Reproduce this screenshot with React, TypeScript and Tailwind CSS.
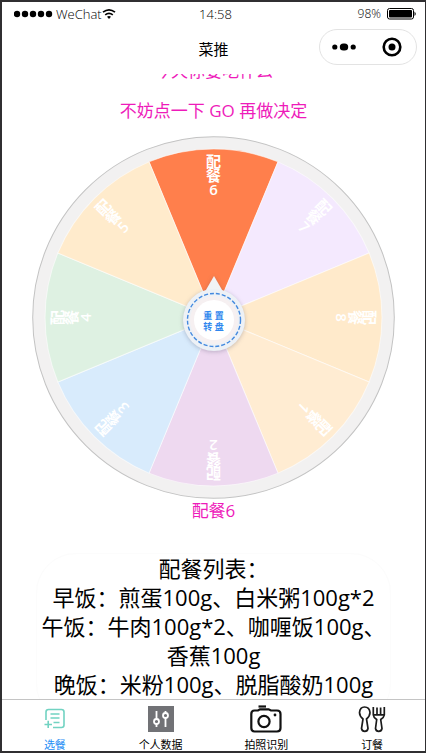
import { useState } from "react";

type Slice = { label: string; digit: string; angle: number; fill: string };

const slices: Slice[] = [
  { label: "配餐", digit: "6", angle: 0, fill: "#ff7f4c" },
  { label: "配餐", digit: "7", angle: 45, fill: "#f4e9fe" },
  { label: "配餐", digit: "8", angle: 90, fill: "#ffeacb" },
  { label: "配餐", digit: "1", angle: 135, fill: "#ffecd2" },
  { label: "配餐", digit: "2", angle: 180, fill: "#eed9f0" },
  { label: "配餐", digit: "3", angle: 225, fill: "#d8ebfc" },
  { label: "配餐", digit: "4", angle: 270, fill: "#def1e2" },
  { label: "配餐", digit: "5", angle: 315, fill: "#ffebcc" },
];

const meals = [
  "配餐列表：",
  "早饭：煎蛋100g、白米粥100g*2",
  "午饭：牛肉100g*2、咖喱饭100g、香蕉100g",
  "晚饭：米粉100g、脱脂酸奶100g",
];

function StatusBar() {
  return (
    <div className="grid grid-cols-3 items-center pt-1 pr-2 pl-3 text-[13px] leading-4 font-light">
      <div className="flex items-center">
        <svg className="h-2 w-10" viewBox="0 0 40 8" aria-hidden="true">
          {[3, 11, 19, 27, 35].map((x) => (
            <circle key={x} cx={x} cy="4" r="3.2" />
          ))}
        </svg>
        <span className="ml-0.5">WeChat</span>
        <svg className="h-3 w-3.5" viewBox="0 0 14 12" fill="none" stroke="#000" aria-hidden="true">
          <path d="M1 4.2Q7-.4 13 4.2" strokeWidth="1.7" />
          <path d="M3.2 6.9Q7 4 10.8 6.9" strokeWidth="1.7" />
          <path d="M5 8.8Q7 7.3 9 8.8L7 11Z" fill="#000" stroke="none" />
        </svg>
      </div>
      <span className="text-center">14:58</span>
      <div className="flex items-center justify-end gap-1.5">
        <span className="text-xs">98%</span>
        <svg className="h-3 w-[30px]" viewBox="0 0 30 12" aria-hidden="true">
          <rect x=".5" y=".5" width="26" height="10.5" rx="2" fill="none" stroke="#000" />
          <rect x="2" y="2" width="23" height="7.5" rx="1" />
          <path d="M27.5 3.5Q30 5.8 27.5 8Z" />
        </svg>
      </div>
    </div>
  );
}

function TitleBar() {
  return (
    <div className="grid grid-cols-[1fr_auto_1fr] items-center">
      <h1 className="col-start-2 pt-1 text-[15px] leading-5">菜推</h1>
      <div className="mr-2 flex h-9 w-[98px] items-center justify-between justify-self-end rounded-full border border-[#e3e3e3] pr-3.5 pl-3">
        <button type="button" aria-label="更多">
          <svg className="h-2 w-6" viewBox="0 0 24 8" aria-hidden="true">
            <circle cx="2.8" cy="4" r="2.6" />
            <rect x="7.8" y="0.4" width="8.4" height="7.2" rx="3.6" />
            <circle cx="21.2" cy="4" r="2.6" />
          </svg>
        </button>
        <button type="button" aria-label="关闭">
          <svg className="h-5 w-5" viewBox="0 0 20 20" aria-hidden="true">
            <circle cx="10" cy="10" r="8.3" fill="none" stroke="#000" strokeWidth="2.6" />
            <circle cx="10" cy="10" r="3.5" />
          </svg>
        </button>
      </div>
    </div>
  );
}

function Wheel({ onReset }: { onReset: () => void }) {
  return (
    <div className="relative mx-[30px]">
      <svg className="block w-full" viewBox="0 0 362 362" role="img" aria-label="配餐转盘">
        <circle cx="181" cy="181" r="180.3" fill="#f2f1f1" stroke="#c3c3c3" />
        {slices.map((s) => (
          <g key={s.angle} transform={`rotate(${s.angle} 181 181)`}>
            <path
              d="M181 181L116.7 25.8A168 168 0 0 1 245.3 25.8Z"
              fill={s.fill}
              stroke="#ffffff"
              strokeOpacity=".55"
            />
          </g>
        ))}
        {slices.map((s) => (
          <g
            key={s.angle}
            transform={`rotate(${s.angle} 181 181)`}
            className="fill-white text-[15px] font-semibold"
            textAnchor="middle"
          >
            <text x="181" y="31">{s.label[0]}</text>
            <text x="181" y="45">{s.label[1]}</text>
            <text x="181" y="59">{s.digit}</text>
          </g>
        ))}
      </svg>
      <button
        type="button"
        onClick={onReset}
        className="absolute top-[139px] left-1/2 h-[78px] w-16 -translate-x-1/2 pt-3.5 text-[9px] leading-[11px] font-bold text-[#2f87ee]"
      >
        <svg className="absolute inset-0 h-full w-full overflow-visible" viewBox="0 0 64 78" aria-hidden="true">
          <g style={{ filter: "drop-shadow(0 1px 2px rgba(60,60,90,.28))" }}>
            <path d="M32 1L21 20H43Z" fill="#f1f3f6" />
            <circle cx="32" cy="45" r="31" fill="#edf1f6" />
          </g>
          <circle cx="32" cy="45" r="24" fill="#f6f0f1" />
          <circle cx="32" cy="45" r="20" fill="#fff" />
          <circle cx="32" cy="45" r="26.5" fill="none" stroke="#4389df" strokeWidth="1.4" strokeDasharray="4 2" />
        </svg>
        <span className="relative block">
          重 置
          <br />转 盘
        </span>
      </button>
    </div>
  );
}

const tabs = [
  {
    name: "选餐",
    icon: (
      <svg className="h-[26px] w-8" viewBox="0 0 32 26" fill="none" stroke="#72d3c2" strokeWidth="1.6" aria-hidden="true">
        <path d="M7 14V6Q7 3.500 9.500 3.500H22.500Q25 3.500 25 6V19Q25 21.500 22.500 21.500H14" />
        <path d="M11.500 8H20.500M11.500 12H20.500M14.500 16.500H20.500M5.500 18.500H13M9.200 14.800V22" />
      </svg>
    ),
  },
  {
    name: "个人数据",
    icon: (
      <svg className="h-[26px] w-[26px]" viewBox="0 0 26 26" fill="none" stroke="#fff" strokeWidth="1.8" aria-hidden="true">
        <rect width="26" height="26" fill="#717276" stroke="none" />
        <path d="M8.500 5V13M8.500 18V21M17.500 5V7M17.500 12V21" />
        <circle cx="8.500" cy="15.500" r="2.500" />
        <circle cx="17.500" cy="9.500" r="2.500" />
      </svg>
    ),
  },
  {
    name: "拍照识别",
    icon: (
      <svg className="h-7 w-8" viewBox="0 0 32 28" fill="none" stroke="#111" strokeWidth="2.2" aria-hidden="true">
        <path d="M8.500 1.500H16" />
        <path d="M4.500 5.500H8L10 4.300H18.500L21 5.500H27Q30.500 5.500 30.500 9V23Q30.500 26.500 27 26.500H4.500Q1.300 26.500 1.300 23V9Q1.300 5.500 4.500 5.500Z" />
        <circle cx="14" cy="16.500" r="5.600" />
        <circle cx="25" cy="10" r="1.400" fill="#111" stroke="none" />
      </svg>
    ),
  },
  {
    name: "订餐",
    icon: (
      <svg className="h-7 w-7" viewBox="0 0 28 28" fill="none" stroke="#1b1b1b" strokeWidth="1.7" strokeLinejoin="round" aria-hidden="true">
        <path d="M5 14Q1.500 11 1.500 7.500Q2 2 6.500 2Q11.500 2 12 7.500Q12 11 8.500 14L10 23.500Q9.500 26.300 6.800 26.300Q4 26.300 3.500 23.500Z" />
        <path d="M15.300 2V10Q15.500 12.500 18.700 14.500L17.500 23.500Q18 26.300 20.700 26.300Q23.500 26.300 24 23.500L22.700 14.500Q26 12.500 26.300 10V2" />
        <path d="M19 2.500V9.500M22.600 2.500V9.500M15.300 9.800H26.300" />
      </svg>
    ),
  },
];

export default function App() {
  const [tab, setTab] = useState("选餐");
  const [result, setResult] = useState("配餐6");

  return (
    <div className="flex h-screen flex-col overflow-hidden border-2 border-r border-[#302f31] bg-white font-['Open_Sans','Noto_Sans_CJK_SC',sans-serif] text-black">
      <header className="h-[72px] shrink-0">
        <StatusBar />
        <div className="pt-[7px]">
          <TitleBar />
        </div>
      </header>

      <main className="min-h-0 flex-1 overflow-hidden">
        <div className="-mt-[23px] text-center">
          <div className="text-[17px] leading-10 text-[#ee1bba]">
            <p>今天你要吃什么</p>
            <p>不妨点一下 GO 再做决定</p>
          </div>
          <div className="mt-[5px]">
            <Wheel onReset={() => setResult("")} />
          </div>
          <p className="h-6 text-[17px] leading-6 text-[#ee1bba]">{result}</p>
          <section className="mx-[34px] mt-[30px] rounded-[40px] border border-[#fcfcfc] pb-6 text-[22px] leading-[29px]">
            {meals.map((m) => (
              <p key={m}>{m}</p>
            ))}
          </section>
        </div>
      </main>

      <nav className="grid shrink-0 grid-cols-4 border-t border-[#c4c4c4] pt-1">
        {tabs.map((t) => (
          <button
            key={t.name}
            type="button"
            onClick={() => setTab(t.name)}
            className={`flex flex-col items-center gap-[5px] text-[11px] leading-3 ${t.name === tab ? "text-[#1e8df5]" : "text-black"}`}
          >
            <span className="flex h-[30px] items-center">{t.icon}</span>
            {t.name}
          </button>
        ))}
      </nav>
    </div>
  );
}
